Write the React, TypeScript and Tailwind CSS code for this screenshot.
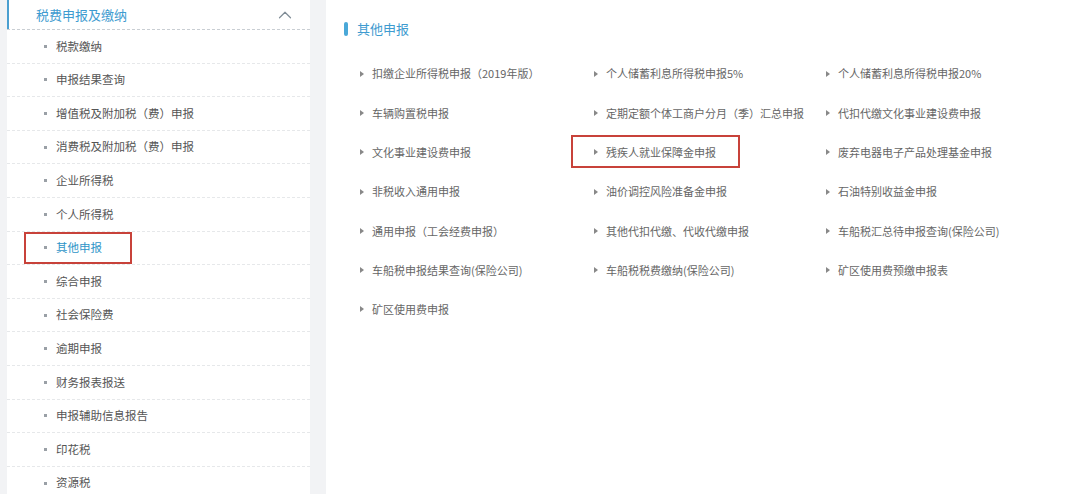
import React from "react";
import { ChevronUp } from "lucide-react";

const menu = [
	"税款缴纳",
	"申报结果查询",
	"增值税及附加税（费）申报",
	"消费税及附加税（费）申报",
	"企业所得税",
	"个人所得税",
	"其他申报",
	"综合申报",
	"社会保险费",
	"逾期申报",
	"财务报表报送",
	"申报辅助信息报告",
	"印花税",
	"资源税",
];

const links = [
	"扣缴企业所得税申报（2019年版）",
	"个人储蓄利息所得税申报5%",
	"个人储蓄利息所得税申报20%",
	"车辆购置税申报",
	"定期定额个体工商户分月（季）汇总申报",
	"代扣代缴文化事业建设费申报",
	"文化事业建设费申报",
	"残疾人就业保障金申报",
	"废弃电器电子产品处理基金申报",
	"非税收入通用申报",
	"油价调控风险准备金申报",
	"石油特别收益金申报",
	"通用申报（工会经费申报）",
	"其他代扣代缴、代收代缴申报",
	"车船税汇总待申报查询(保险公司)",
	"车船税申报结果查询(保险公司)",
	"车船税税费缴纳(保险公司)",
	"矿区使用费预缴申报表",
	"矿区使用费申报",
];

const font = { fontFamily: '"Microsoft YaHei", "Noto Sans CJK SC", "Noto Sans", sans-serif' };

export default function App() {
	return (
		<div className="flex h-[494px] w-[1080px] overflow-hidden bg-[#f2f3f5]" style={font}>
			{/* 左侧菜单 */}
			<div className="ml-[7px] w-[303px] shrink-0 bg-white">
				<div className="flex h-[30px] items-center border-b border-dashed border-[#c9ced3] pr-[14px]">
					<span className="h-full w-[2px] bg-[#4a9fd0]" />
					<span className="ml-[27px] flex-1 text-[13px] text-[#3e9bd0]">税费申报及缴纳</span>
					<ChevronUp size={22} strokeWidth={1.3} className="text-[#7f8c96]" />
				</div>
				{menu.map((item) => (
					<div
						key={item}
						className="relative flex h-[33.6px] items-center border-b border-dashed border-[#e6e8ea] pl-[37px]">
						<span className="mr-[9px] h-[3px] w-[3px] bg-[#9aa0a6]" />
						<span
							className={`text-[11.5px] ${
								item === "其他申报" ? "text-[#2f95c8]" : "text-[#555]"
							}`}>
							{item}
						</span>
						{item === "其他申报" && (
							<div className="absolute left-[17px] top-0 h-full w-[108px] border-2 border-[#c8423a]" />
						)}
					</div>
				))}
			</div>

			{/* 右侧内容 */}
			<div className="ml-[16px] flex-1 bg-white pl-[18px] pt-[21px]">
				<div className="flex h-[16px] items-center">
					<span className="mr-[9px] h-[14px] w-[4px] rounded-full bg-[#4aa8d8]" />
					<span className="text-[13px] text-[#3e9bd0]">其他申报</span>
				</div>
				<div className="mt-[17px] grid grid-cols-[234px_232px_1fr] pl-[16px]">
					{links.map((item) => (
						<div key={item} className="relative flex h-[39.3px] items-center">
							<span className="mr-[8px] h-0 w-0 border-y-[3px] border-l-[4px] border-y-transparent border-l-[#888]" />
							<span className="text-[11px] text-[#666]">{item}</span>
							{item === "残疾人就业保障金申报" && (
								<div className="absolute left-[-23px] top-[2px] h-[33px] w-[169px] border-2 border-[#c8423a]" />
							)}
						</div>
					))}
				</div>
			</div>
		</div>
	);
}
